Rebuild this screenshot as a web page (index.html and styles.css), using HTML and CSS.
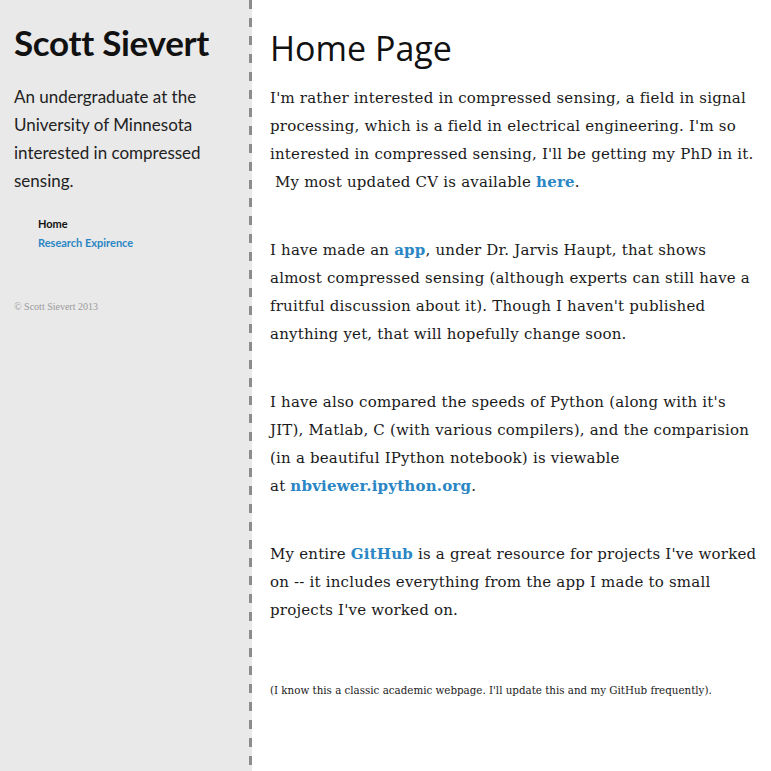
FILE: index.html
```html
<!DOCTYPE html>
<html>
<head>
<meta charset="utf-8">
<link rel="stylesheet" href="styles.css">
</head>
<body>
<div class="page">
  <aside class="sidebar">
    <h1 class="name">Scott Sievert</h1>
    <p class="tagline">An undergraduate at the University of Minnesota interested in compressed sensing.</p>
    <nav class="nav">
      <a class="nav-item current" href="#">Home</a>
      <a class="nav-item" href="#">Research Expirence</a>
    </nav>
    <p class="copy">© Scott Sievert 2013</p>
  </aside>
  <div class="rule"></div>
  <main class="content">
    <h2 class="title">Home Page</h2>
    <p>I'm rather interested in compressed sensing, a field in signal processing, which is a field in electrical engineering. I'm so interested in compressed sensing, I'll be getting my PhD in it. &nbsp;My most updated CV is available <a href="#">here</a>.</p>
    <p>I have made an <a href="#">app</a>, under Dr. Jarvis Haupt, that shows almost compressed sensing (although experts can still have a fruitful discussion about it). Though I haven't published anything yet, that will hopefully change soon.</p>
    <p>I have also compared the speeds of Python (along with it's JIT), Matlab, C (with various compilers), and the comparision (in a beautiful IPython notebook) is viewable at&nbsp;<a href="#">nbviewer.ipython.org</a>.</p>
    <p>My entire <a href="#">GitHub</a> is a great resource for projects I've worked on -- it includes everything from the app I made to small projects I've worked on.</p>
    <p class="note">(I know this a classic academic webpage. I'll update this and my GitHub frequently).</p>
  </main>
</div>
</body>
</html>
```
FILE: styles.css
```css
html, body {
  margin: 0;
  padding: 0;
  background: #ffffff;
}
.page {
  display: flex;
  min-height: 771px;
}
.sidebar {
  width: 235px;
  flex: none;
  background: #e9e9e9;
  padding: 0 0 0 14px;
  font-family: "Lato", "Open Sans", sans-serif;
}
.rule {
  width: 3px;
  flex: none;
  background-color: #e9e9e9;
  background-image: repeating-linear-gradient(to bottom, #8c8c8c 0, #8c8c8c 9px, transparent 9px, transparent 18px);
}
.name {
  margin: 22px 0 0;
  font-size: 35px;
  font-weight: 700;
  line-height: 40px;
  color: #111;
  letter-spacing: -0.3px;
}
.tagline {
  margin: 21px 0 0;
  font-size: 17px;
  line-height: 28px;
  color: #222;
  padding-right: 20px;
}
.nav {
  display: flex;
  flex-direction: column;
  gap: 4px;
  margin: 21px 0 0 24px;
}
.nav-item {
  font-size: 11px;
  font-weight: 700;
  line-height: 15px;
  color: #2a86c4;
  text-decoration: none;
}
.nav-item.current {
  color: #111;
}
.copy {
  margin: 51px 0 0;
  font-family: "Liberation Serif", serif;
  font-size: 10px;
  color: #9a9a9a;
}
.content {
  flex: 1;
  padding: 0 12px 0 18px;
  font-family: "DejaVu Serif", Georgia, serif;
  font-size: 15px;
  letter-spacing: 0.2px;
  line-height: 28px;
  color: #1a1a1a;
}
.title {
  margin: 26px 0 0;
  font-family: "Open Sans", sans-serif;
  font-weight: 400;
  font-size: 34px;
  line-height: 44px;
  letter-spacing: 0;
  color: #111;
}
.content p {
  margin: 14px 0 40px;
}
.content p + p {
  margin-top: 0;
}
.content a {
  color: #2a86c4;
  font-weight: 700;
  text-decoration: none;
}
.content .note {
  margin-top: 58px;
  font-size: 10.3px;
  letter-spacing: 0;
  line-height: 16px;
}
```
